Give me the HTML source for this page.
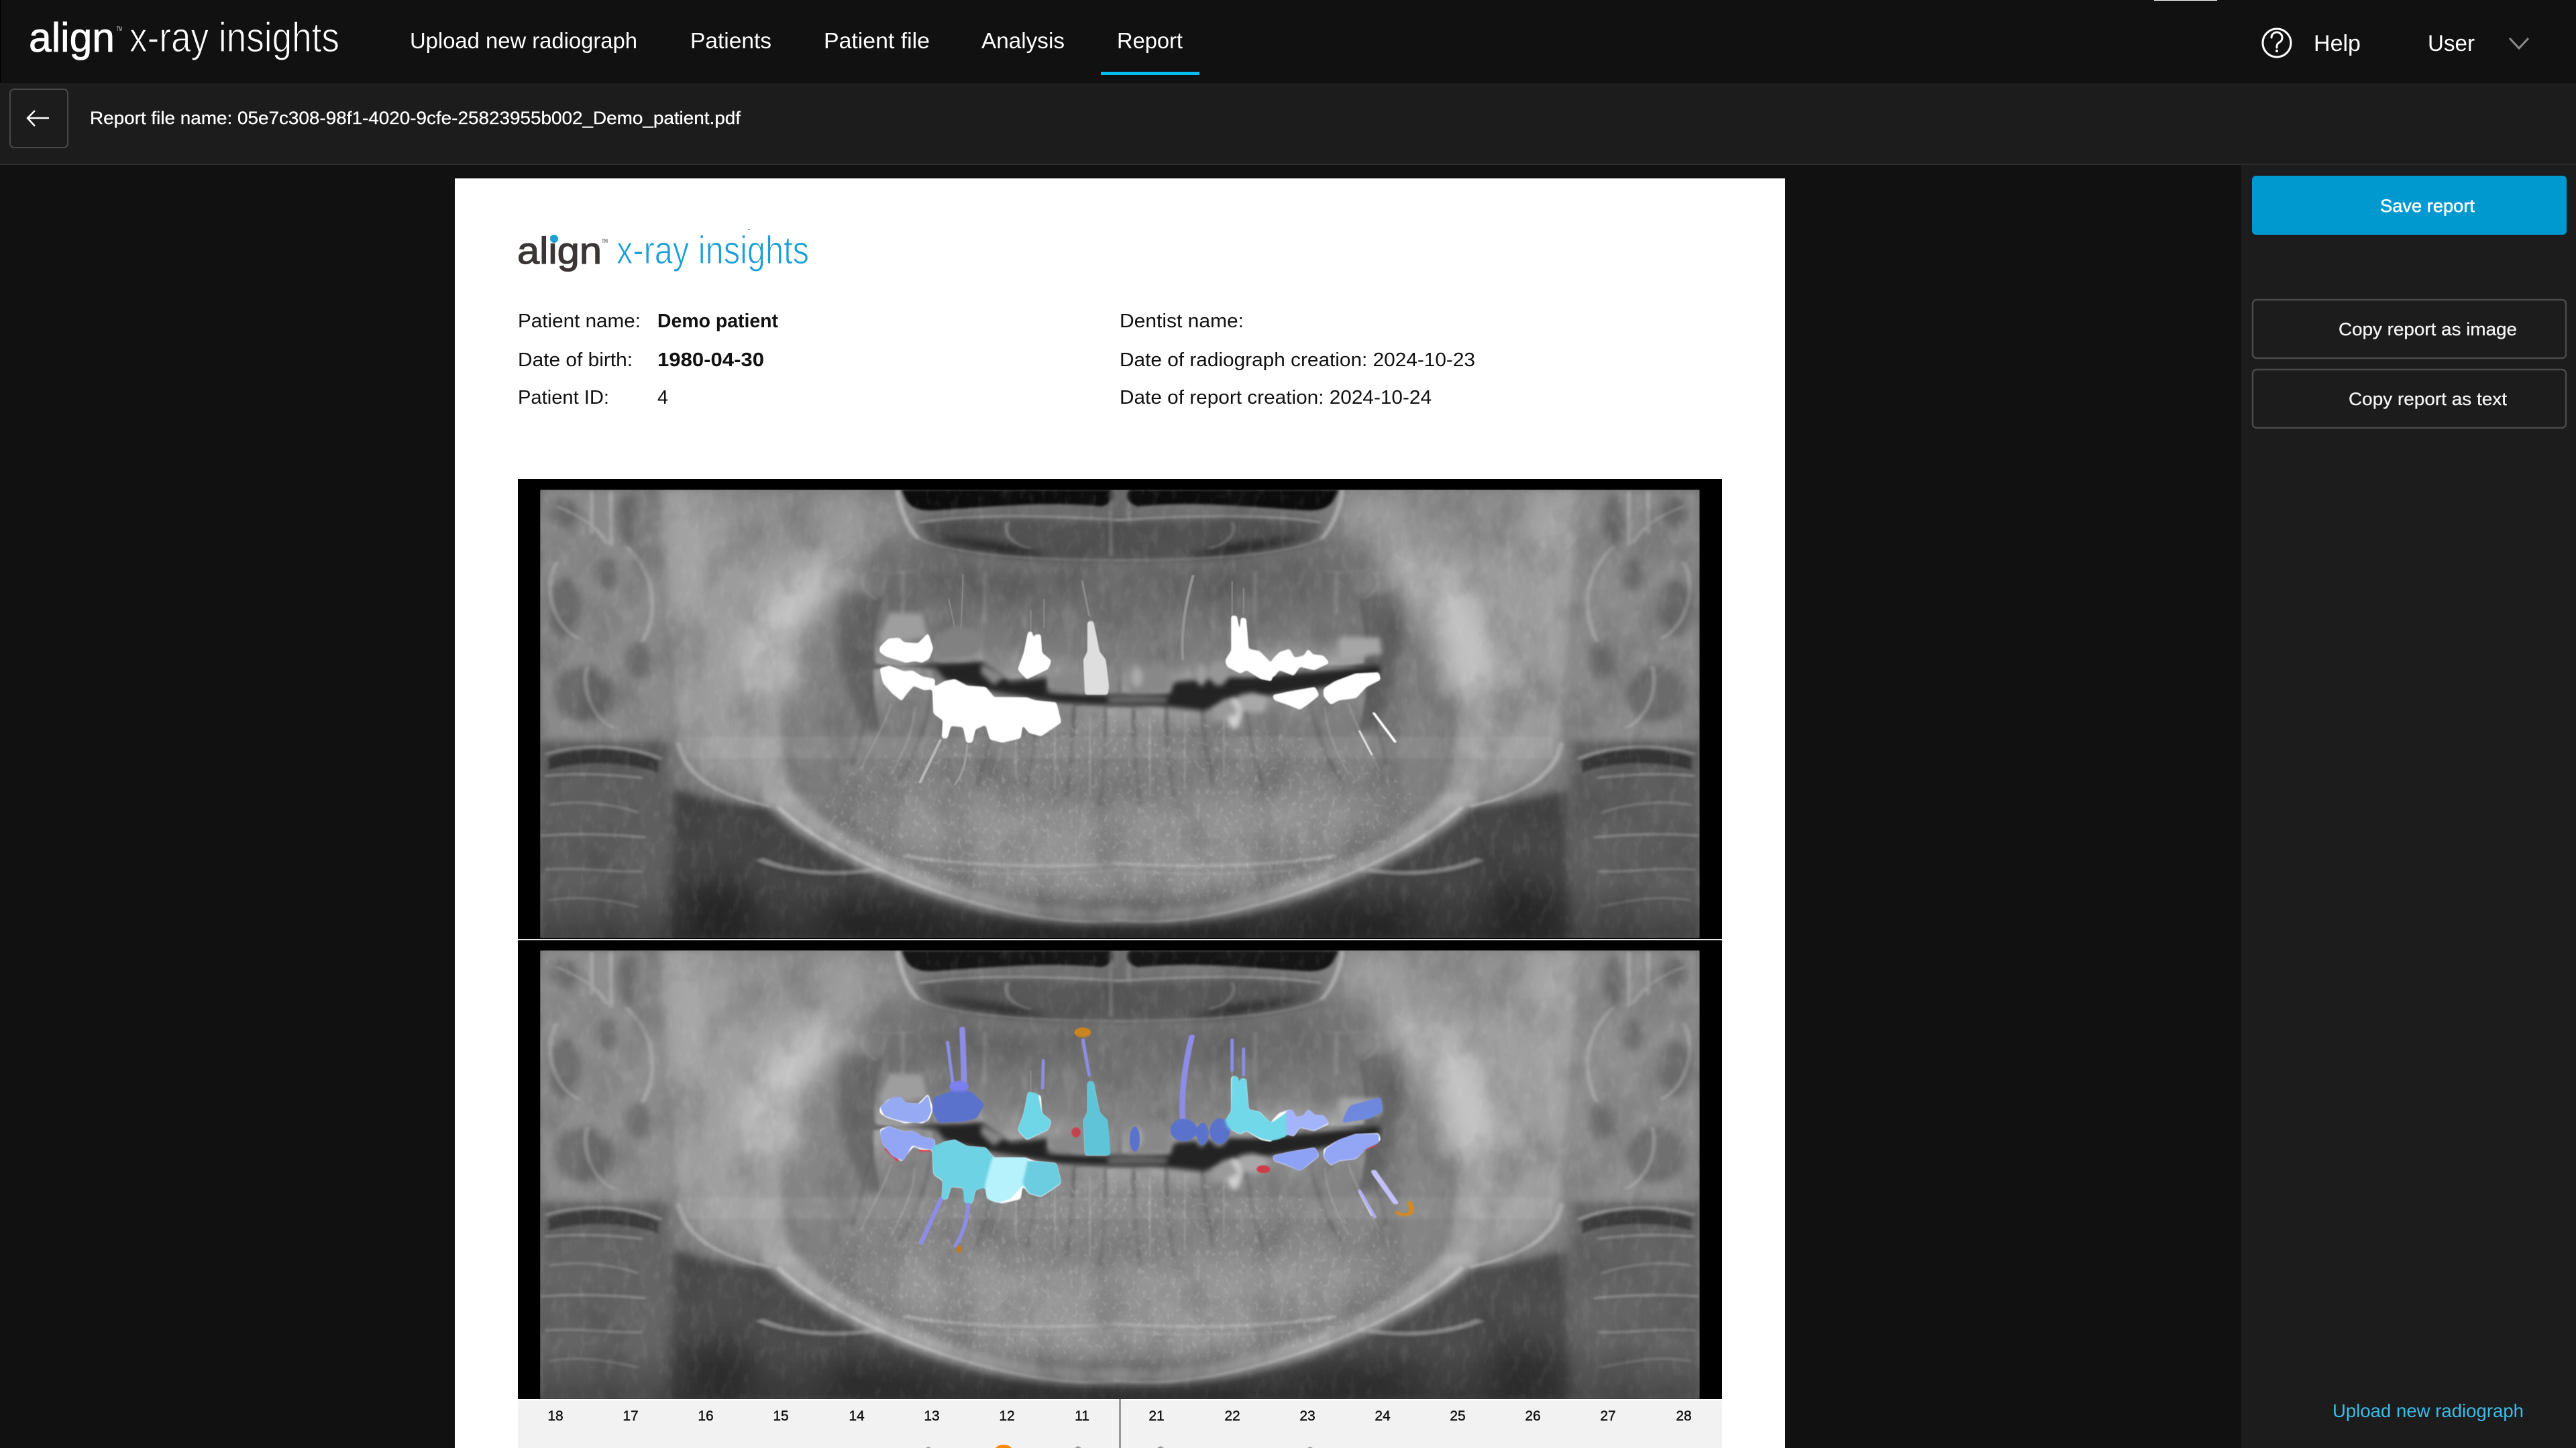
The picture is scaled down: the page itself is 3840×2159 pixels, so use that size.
<!DOCTYPE html>
<html lang="en">
<head>
<meta charset="utf-8">
<title>align x-ray insights - Report</title>
<style>
html,body{margin:0;padding:0;background:#111;width:3840px;height:2159px;overflow:hidden}
svg{display:block;position:absolute;left:0;top:0}
text{font-family:"Liberation Sans",Arial,sans-serif}
</style>
</head>
<body>
<svg xmlns="http://www.w3.org/2000/svg" width="3840" height="2159" viewBox="0 0 3840 2159">
<defs>
<filter id="b2" filterUnits="userSpaceOnUse" x="-50" y="-50" width="1700" height="1700" color-interpolation-filters="sRGB"><feGaussianBlur stdDeviation="2 4"/></filter>
<filter id="b6" filterUnits="userSpaceOnUse" x="-50" y="-50" width="1700" height="1700" color-interpolation-filters="sRGB"><feGaussianBlur stdDeviation="6 12"/></filter>
<filter id="b20" filterUnits="userSpaceOnUse" x="-200" y="-200" width="2000" height="2000" color-interpolation-filters="sRGB"><feGaussianBlur stdDeviation="22 44"/></filter>
<filter id="m1" filterUnits="userSpaceOnUse" x="-50" y="-50" width="1700" height="1700" color-interpolation-filters="sRGB"><feGaussianBlur stdDeviation="1 2"/></filter>
<filter id="goo" filterUnits="userSpaceOnUse" x="-50" y="-50" width="1700" height="1700" color-interpolation-filters="sRGB">
<feGaussianBlur stdDeviation="3 6"/>
<feColorMatrix values="1 0 0 0 0 0 1 0 0 0 0 0 1 0 0 0 0 0 7 -2.6"/>
<feGaussianBlur stdDeviation="1 2"/>
</filter>
<filter id="grain" x="0" y="0" width="100%" height="100%" color-interpolation-filters="sRGB">
<feTurbulence type="fractalNoise" baseFrequency=".02 .006" numOctaves="4" seed="4"/>
<feColorMatrix values="0 0 0 0 .15  0 0 0 0 .15  0 0 0 0 .15  2.2 0 0 0 -.95"/>
</filter>
<filter id="grain2" x="0" y="0" width="100%" height="100%" color-interpolation-filters="sRGB">
<feTurbulence type="fractalNoise" baseFrequency=".09 .02" numOctaves="3" seed="9"/>
<feColorMatrix values="0 0 0 0 1  0 0 0 0 1  0 0 0 0 1  2.4 0 0 0 -1.15"/>
</filter>
<filter id="grain3" x="0" y="0" width="100%" height="100%" color-interpolation-filters="sRGB">
<feTurbulence type="fractalNoise" baseFrequency=".16 .05" numOctaves="2" seed="21"/>
<feColorMatrix values="0 0 0 0 1  0 0 0 0 1  0 0 0 0 1  4 0 0 0 -2.2"/>
</filter>
<linearGradient id="up" x1="0" y1="0" x2="0" y2="1"><stop offset="0" stop-color="#6a6a6a" stop-opacity="0"/><stop offset=".3" stop-color="#6e6e6e"/><stop offset=".7" stop-color="#7c7c7c"/><stop offset="1" stop-color="#a4a4a4"/></linearGradient>
<linearGradient id="lo" x1="0" y1="0" x2="0" y2="1"><stop offset="0" stop-color="#a2a2a2"/><stop offset=".35" stop-color="#808080"/><stop offset="1" stop-color="#787878" stop-opacity="0"/></linearGradient>
<linearGradient id="fade" x1="0" y1="0" x2="0" y2="1"><stop offset="0" stop-color="#000" stop-opacity="0"/><stop offset=".88" stop-color="#000" stop-opacity="0"/><stop offset="1" stop-color="#000" stop-opacity=".3"/></linearGradient>
<clipPath id="xc"><rect x="39" y="66" width="1489" height="1456"/></clipPath>
<clipPath id="tb"><ellipse cx="784" cy="1110" rx="380" ry="300"/></clipPath>

<g id="half">
 <!-- ramus -->
 <path filter="url(#b20)" fill="#9c9c9c" d="M190,66H505V240C450,270 400,340 370,480C340,620 325,800 335,1090L290,1075C240,1030 215,960 215,880Z"/>
 <path filter="url(#b6)" fill="#ababab" opacity=".55" d="M190,66H258C240,400 232,700 232,900C228,940 222,930 215,900C205,600 195,300 190,66Z"/>
 <path filter="url(#b20)" fill="#7a7a7a" opacity=".4" d="M262,70H415C420,170 400,270 350,285C300,290 268,200 262,70Z"/>
 <!-- upper spine -->
 <path filter="url(#b6)" fill="#8a8a8a" d="M39,66H190L215,880H39Z"/>
 <g filter="url(#b6)" fill="#4c4c4c" opacity=".5">
  <ellipse cx="70" cy="450" rx="22" ry="95"/><ellipse cx="125" cy="340" rx="14" ry="55"/><ellipse cx="150" cy="160" rx="12" ry="85"/><ellipse cx="70" cy="140" rx="16" ry="50"/><ellipse cx="95" cy="730" rx="38" ry="90"/><ellipse cx="165" cy="620" rx="16" ry="60"/>
 </g>
 <g fill="none" stroke="#d0d0d0" stroke-width="5" opacity=".38" filter="url(#b2)">
  <path d="M60,300C40,400 60,520 90,550"/><path d="M100,640C90,720 110,820 135,840"/><path d="M150,250C190,350 190,470 170,560"/><path d="M60,120C90,150 110,180 125,240"/><path d="M130,70V250"/><path d="M105,70V210"/>
 </g>
 <!-- lower spine -->
 <path filter="url(#b6)" fill="#5e5e5e" d="M39,890H200L215,1522H39Z"/>
 <path filter="url(#b2)" fill="#363636" d="M50,935C90,900 150,900 190,945L190,985C150,945 90,945 50,975Z"/>
 <g fill="none" stroke="#bcbcbc" filter="url(#b2)" opacity=".55">
  <path stroke-width="7" d="M45,925C90,890 150,890 195,940"/>
  <path stroke-width="6" d="M45,995C90,985 130,990 170,1002"/>
  <path stroke-width="4" d="M50,1090C90,1070 140,1090 165,1115"/>
  <path stroke-width="6" d="M40,1190C80,1180 130,1185 175,1195"/>
  <path stroke-width="5" d="M45,1300C90,1290 130,1310 170,1305"/>
  <path stroke-width="4" d="M50,1400C90,1380 130,1400 165,1420"/>
 </g>
 <!-- below-jaw darkness -->
 <path filter="url(#b6)" fill="#464646" d="M210,1040C280,1090 330,1100 345,1100C400,1230 520,1370 650,1440C720,1475 760,1470 790,1465V1530H205Z"/>
 <path filter="url(#b20)" fill="#1c1c1c" opacity=".6" d="M225,1330H310V1530H225ZM400,1400L520,1430L640,1530H420Z"/>
 <path filter="url(#b20)" fill="#1c1c1c" opacity=".7" d="M620,1470H800V1540H620Z"/>
 <path filter="url(#b2)" fill="none" stroke="#808080" stroke-width="14" d="M320,1265C360,1310 430,1330 490,1285"/>
 <!-- jaw interior -->
 <path filter="url(#b20)" fill="#808080" d="M340,820C330,980 360,1090 430,1190C510,1310 600,1395 655,1420C720,1455 760,1455 790,1445V310C700,310 540,300 490,330C440,370 350,520 340,820Z"/>
 <path filter="url(#b20)" fill="#939393" d="M480,1050L790,1100V1400L630,1350L490,1200Z"/>
 <path filter="url(#b20)" fill="#616161" d="M520,300C600,300 700,320 790,320V440H500Z"/>
 <path filter="url(#b6)" fill="#5a5a5a" opacity=".75" d="M425,390C410,560 430,760 462,850L485,850L490,420Z"/>
 <!-- bright bands -->
 <g fill="none" stroke-linecap="round">
  <path filter="url(#b6)" stroke="#bcbcbc" stroke-width="50" opacity=".62" d="M350,1070C400,1230 540,1370 640,1425C720,1460 760,1455 790,1448"/>
  <path filter="url(#b6)" stroke="#b4b4b4" stroke-width="40" opacity=".6" d="M325,700C330,860 330,960 350,1070"/>
  <path filter="url(#b20)" stroke="#d0d0d0" stroke-width="70" opacity=".85" d="M410,330C355,420 335,540 335,700"/>
  <path filter="url(#b2)" stroke="#c4c4c4" stroke-width="7" opacity=".8" d="M345,1097C400,1230 520,1370 650,1440C720,1475 760,1470 790,1462"/>
  <path filter="url(#b2)" stroke="#b8b8b8" stroke-width="7" opacity=".8" d="M217,890C225,1000 270,1060 332,1092"/>
  <path filter="url(#b2)" stroke="#b4b4b4" stroke-width="10" opacity=".7" d="M510,1255C570,1285 700,1296 790,1278"/>
  <path filter="url(#b2)" stroke="#a4a4a4" stroke-width="6" opacity=".7" d="M560,1300C640,1320 720,1315 790,1300"/>
  <path filter="url(#b2)" stroke="#b4b4b4" stroke-width="5" opacity=".5" d="M430,280C400,320 360,370 340,440"/>
 </g>
 <!-- nasal region -->
 <path filter="url(#b6)" fill="#525252" d="M525,170C600,150 700,160 790,170V296C700,295 590,280 540,240Z"/>
 <path filter="url(#b2)" fill="#0c0c0c" d="M503,66H772C778,90 772,112 760,120C700,104 640,116 550,132C520,138 510,120 503,66Z"/>
 <path filter="url(#b6)" fill="#2a2a2a" d="M548,215C590,270 660,282 700,286L640,240Z"/>
 <g fill="none" filter="url(#b2)" opacity=".6">
  <path stroke="#cfcfcf" stroke-width="6" d="M498,66C500,120 510,190 525,225"/>
  <path stroke="#b8b8b8" stroke-width="6" d="M525,172C600,142 700,150 790,165"/>
  <path stroke="#9c9c9c" stroke-width="5" d="M525,225C570,280 680,295 790,295"/>
  <path stroke="#a0a0a0" stroke-width="4" d="M640,170C630,210 650,250 670,255"/>
  <path stroke="#8f8f8f" stroke-width="4" d="M440,270C430,300 470,350 520,330"/>
  <path stroke="#909090" stroke-width="4" d="M795,70V280"/>
 </g>
 <!-- lower teeth -->
 <g fill="url(#lo)" filter="url(#b2)">
  <path d="M467,650Q505,635 543,650C545,760 530,900 515,1000H495C480,900 465,760 467,650Z"/>
  <path d="M545,700Q585,680 620,700C620,820 610,930 595,1040H570C555,930 540,820 545,700Z"/>
  <path d="M625,745Q650,730 675,745C675,860 668,950 660,1020H640C632,950 625,860 625,745Z"/>
  <path d="M680,760Q700,750 722,760C722,880 716,980 710,1060H692C686,980 680,880 680,760Z"/>
  <path d="M726,770Q745,762 764,770C764,890 760,1000 755,1090H736C730,1000 726,890 726,770Z"/>
  <path d="M768,775Q785,768 800,775C800,890 797,1000 793,1100H776C770,1000 768,890 768,775Z"/>
 </g>
 <g fill="none" stroke="#565656" stroke-width="5" opacity=".38" filter="url(#b2)">
  <path d="M543,700C538,820 520,930 500,1010"/><path d="M622,745C622,830 610,950 598,1040"/><path d="M677,760C677,860 670,960 664,1030"/><path d="M724,775C724,860 720,990 714,1060"/><path d="M766,780C766,880 762,1000 758,1090"/><path d="M465,700C462,780 448,880 440,960"/>
 </g>
 <g fill="none" stroke="#b0b0b0" stroke-width="3" opacity=".35" filter="url(#m1)">
  <path d="M490,760C480,840 460,920 450,980"/><path d="M520,770C520,840 505,920 490,990"/><path d="M650,790V1000"/><path d="M700,790V1040"/><path d="M745,800V1060"/>
 </g>
 <!-- upper teeth -->
 <g fill="url(#up)" filter="url(#b2)">
  <path d="M470,630C465,540 470,480 491,330L519,330C540,480 545,540 540,630Q505,645 470,630Z"/>
  <path d="M543,625C538,535 543,475 562,330L588,330C607,475 612,535 607,625Q575,640 543,625Z"/>
  <path d="M609,675C604,585 609,525 625,320L645,320C661,525 666,585 661,675Q635,690 609,675Z"/>
  <path d="M664,700C659,610 664,550 680,310L700,310C716,550 721,610 716,700Q690,715 664,700Z"/>
  <path d="M720,728C715,640 720,580 738,300L762,300C780,580 785,640 780,728Q750,742 720,728Z"/>
 </g>
 <g fill="none" stroke="#949494" stroke-width="4" opacity=".5" filter="url(#b2)">
  <path d="M505,330V470"/><path d="M470,420C450,390 445,360 460,330"/><path d="M610,330V500"/>
 </g>
</g>

<g id="xray">
 <g clip-path="url(#xc)">
  <rect x="39" y="66" width="1489" height="1456" fill="#727272"/>
  <use href="#half"/>
  <use href="#half" transform="matrix(-1 0 0 1 1567 0)"/>
  <rect x="225" y="868" width="1115" height="70" fill="#fff" opacity=".07" filter="url(#b2)"/>
  <rect x="39" y="66" width="1489" height="1456" filter="url(#grain)" opacity=".2"/>
  <rect x="39" y="66" width="1489" height="1456" filter="url(#grain2)" opacity=".08"/>
  <g clip-path="url(#tb)"><rect x="400" y="810" width="770" height="600" filter="url(#grain3)" opacity=".14"/></g>
  <rect x="39" y="66" width="1489" height="1456" fill="url(#fade)"/>
 </g>
</g>

<!-- teeth detail, occlusal gap, metal in z5 coordinates -->
<g id="mouth">
 <path filter="url(#b6)" fill="#232323" d="M190,420C240,415 290,430 320,440L340,490C380,510 420,530 450,540L620,592L700,600L850,605L960,628C990,630 1005,600 1020,578L1130,562L1270,522L1400,460V425L1260,450L1100,480L1030,480L900,500L890,552L760,562L590,548L590,480L500,500L430,410L320,420Z"/>
 <path filter="url(#b6)" fill="#666" d="M735,565C790,555 840,558 885,568L880,596L740,598Z"/>
 <g filter="url(#b6)" fill="#888">
  <path d="M592,480L680,450L688,550L604,545Z"/>
  <path d="M790,440L885,430L888,545L790,550Z"/>
  <ellipse cx="808" cy="478" rx="14" ry="45" fill="#aaa"/>
  <ellipse cx="965" cy="470" rx="12" ry="48" fill="#a0a0a0"/>
  <ellipse cx="1008" cy="462" rx="22" ry="55" fill="#969696"/>
  <path d="M430,420L490,470L460,515L428,460Z"/>
  <path d="M1300,300L1400,300L1405,375L1300,405Z" fill="#a6a6a6"/>
  <path d="M180,300L205,190L285,195L300,300L190,335Z" fill="#9e9e9e"/>
  <path d="M320,300L360,250L420,270L435,340L395,395L325,395Z" fill="#818181"/>
  <ellipse cx="1045" cy="640" rx="18" ry="70" fill="#d0d0d0"/>
  <path d="M1055,560L1090,548L1128,570L1118,635L1065,635Z" fill="#a8a8a8"/>
  <path d="M990,620L1038,585L1055,640L1005,675Z" fill="#9a9a9a"/>
 </g>
</g>
<g id="metal">
 <g fill="#fff" filter="url(#goo)">
  <path d="M182,345L203,307L230,303L240,323L275,328L300,282L312,350L302,397L285,414L268,407L245,414L225,402L198,387L182,367Z"/>
  <path d="M182,440L205,428L240,453L262,450L285,476L317,488L314,532L290,537L265,517L250,547L235,585L213,552L190,505Z"/>
  <path d="M310,530L340,497L365,488L395,518L440,523L460,568L540,570L560,583L612,593L624,682L575,743L545,728L530,692L525,752L480,772L450,757L440,692L415,712L407,772L393,772L385,702L355,697L347,752L333,752L336,672L313,642Z"/>
  <path d="M543,278L552,273L557,310L561,288L574,288L577,370L600,405L592,442L540,488L518,445L533,370Z"/>
  <path d="M1038,203L1052,206L1057,270L1060,270L1061,213L1074,216L1080,353L1107,363L1137,420L1137,497L1110,487L1075,447L1060,462L1028,432L1023,405L1038,360Z"/>
  <path d="M1138,400L1155,368L1180,353L1192,393L1215,383L1225,353L1237,378L1262,383L1277,415L1240,447L1205,432L1190,472L1155,447L1140,482L1133,430Z"/>
  <path d="M1138,560L1180,543L1242,523L1252,560L1227,597L1205,624L1175,602L1143,582Z"/>
  <path d="M1263,530L1290,498L1340,463L1397,458L1402,490L1367,522L1342,572L1300,582L1280,602L1263,565Z"/>
 </g>
 <path fill="#dedede" filter="url(#goo)" d="M688,230L702,228L710,300L717,365L732,400L740,520L737,557L682,557L678,400L688,365Z"/>
 <g fill="none" stroke-linecap="round" filter="url(#m1)">
  <path stroke="#fff" stroke-width="7" d="M1385,640L1395,665L1437,768"/>
  <path stroke="#e0e0e0" stroke-width="5" d="M1350,720L1380,825"/>
  <path stroke="#b8b8b8" stroke-width="7" d="M330,760L280,950"/>
  <path stroke="#a0a0a0" stroke-width="5" d="M395,780C392,860 385,910 365,960"/>
  <path stroke="#929292" stroke-width="4" d="M675,50L692,205"/>
  <path stroke="#949494" stroke-width="7" d="M945,25C925,150 915,300 920,400"/>
  <path stroke="#8e8e8e" stroke-width="3" d="M1040,50V200M1068,80V200M550,180V270M582,130V260M385,20L380,260M350,130L365,260"/>
 </g>
</g>
</defs>

<!-- page chrome -->
<rect width="3840" height="2159" fill="#111"/>
<rect y="122" width="3840" height="1" fill="#000"/>
<rect y="123" width="3840" height="121" fill="#1c1c1c"/>
<rect y="244" width="3840" height="2" fill="#2c2c2c"/>
<rect x="3341" y="246" width="499" height="1913" fill="#1c1c1c"/>
<rect x="3211" y="0" width="94" height="1" fill="#fff"/>
<rect x="0" y="0" width="1" height="122" fill="#000"/>

<!-- header -->
<text x="43" y="77" font-size="61" fill="#fff" stroke="#fff" stroke-width=".8" textLength="128" lengthAdjust="spacingAndGlyphs">align</text>
<text x="174" y="46" font-size="9" fill="#ddd" textLength="8" lengthAdjust="spacingAndGlyphs">TM</text>
<text x="193" y="77" font-size="62" fill="#fff" stroke="#111" stroke-width="1.2" textLength="313" lengthAdjust="spacingAndGlyphs">x-ray insights</text>

<g font-size="33" fill="#fff">
<text x="611" y="72" textLength="339" lengthAdjust="spacingAndGlyphs">Upload new radiograph</text>
<text x="1029" y="72" textLength="121" lengthAdjust="spacingAndGlyphs">Patients</text>
<text x="1228" y="72" textLength="158" lengthAdjust="spacingAndGlyphs">Patient file</text>
<text x="1463" y="72" textLength="124" lengthAdjust="spacingAndGlyphs">Analysis</text>
<text x="1665" y="72" textLength="98" lengthAdjust="spacingAndGlyphs">Report</text>
<text x="3449" y="76" textLength="70" lengthAdjust="spacingAndGlyphs" font-size="34">Help</text>
<text x="3619" y="76" textLength="70" lengthAdjust="spacingAndGlyphs" font-size="34">User</text>
</g>
<rect x="1641" y="107" width="147" height="5" fill="#00bfee"/>

<circle cx="3394" cy="64" r="21" fill="none" stroke="#fff" stroke-width="3"/>
<path d="M3386,56a8,8 0 1 1 12,7c-3,2 -4,3 -4,8" fill="none" stroke="#fff" stroke-width="3" stroke-linecap="round"/>
<circle cx="3394" cy="76" r="2" fill="#fff"/>
<path d="M3741,57L3755,72L3769,57" fill="none" stroke="#8a8a8a" stroke-width="3"/>

<!-- sub bar -->
<rect x="15" y="133" width="86" height="87" rx="6" fill="#1c1c1c" stroke="#484848" stroke-width="2"/>
<path d="M73,176H41M52,165L41,176L52,188" fill="none" stroke="#fff" stroke-width="2.5"/>
<text x="134" y="185" font-size="27" fill="#fff" stroke="#fff" stroke-width=".3" textLength="970" lengthAdjust="spacingAndGlyphs">Report file name: 05e7c308-98f1-4020-9cfe-25823955b002_Demo_patient.pdf</text>

<!-- report page -->
<rect x="678" y="266" width="1983" height="1893" fill="#fff"/>
<text x="771" y="393" font-size="56" fill="#3b3535" stroke="#3b3535" stroke-width="1.2" textLength="126" lengthAdjust="spacingAndGlyphs">align</text>
<circle cx="826" cy="356" r="6" fill="#1a9fd6"/>
<text x="897" y="362" font-size="8" fill="#3b3535" textLength="9" lengthAdjust="spacingAndGlyphs">TM</text>
<text x="919" y="393" font-size="58" fill="#1a9fd6" stroke="#fff" stroke-width="1.1" textLength="287" lengthAdjust="spacingAndGlyphs">x-ray insights</text>
<rect x="1115" y="342" width="3" height="1" fill="#1a9fd6"/>

<g font-size="29" fill="#111">
<text x="772" y="488" textLength="183" lengthAdjust="spacingAndGlyphs">Patient name:</text>
<text x="980" y="488" font-weight="bold" textLength="180" lengthAdjust="spacingAndGlyphs">Demo patient</text>
<text x="772" y="546" textLength="171" lengthAdjust="spacingAndGlyphs">Date of birth:</text>
<text x="980" y="546" font-weight="bold" textLength="159" lengthAdjust="spacingAndGlyphs">1980-04-30</text>
<text x="772" y="602" textLength="136" lengthAdjust="spacingAndGlyphs">Patient ID:</text>
<text x="980" y="602" textLength="16" lengthAdjust="spacingAndGlyphs">4</text>
<text x="1669" y="488" textLength="185" lengthAdjust="spacingAndGlyphs">Dentist name:</text>
<text x="1669" y="546" textLength="530" lengthAdjust="spacingAndGlyphs">Date of radiograph creation: 2024-10-23</text>
<text x="1669" y="602" textLength="465" lengthAdjust="spacingAndGlyphs">Date of report creation: 2024-10-24</text>
</g>

<!-- radiographs -->
<rect x="772" y="714" width="1795" height="1372" fill="#000"/>
<rect x="772" y="1400" width="1795" height="2" fill="#e8e8e8"/>
<g transform="translate(760,700) scale(1.1607,.4591)"><use href="#xray"/></g>
<g transform="translate(1200,850) scale(.6122,.3333)"><use href="#mouth"/><use href="#metal"/></g>

<g transform="translate(760,1387) scale(1.1607,.4591)"><use href="#xray"/></g>
<rect x="805" y="1417" width="1729" height="669" fill="#fff" opacity=".04"/>
<g transform="translate(1200,1537) scale(.6122,.3333)"><use href="#mouth"/><use href="#metal"/></g>

<!-- coloured overlays (z7 coordinates) -->
<g transform="translate(1200,1500) scale(.6122,.3333)">
 <g fill="none" stroke="#8d8de6" stroke-linecap="round" filter="url(#m1)">
  <path stroke-width="8" d="M347,160L360,350"/>
  <path stroke-width="14" d="M383,100L388,350"/>
  <path stroke-width="8" d="M677,150L692,310"/>
  <path stroke-width="7" d="M580,240L578,370"/>
  <path stroke-width="14" d="M942,135C925,260 915,400 920,510"/>
  <path stroke-width="8" d="M1040,150V290"/>
  <path stroke-width="8" d="M1068,190V310"/>
  <path stroke-width="12" d="M332,860L283,1060"/>
  <path stroke-width="10" d="M398,880C395,960 385,1020 365,1075"/>
  <path stroke="#c3c0fb" stroke-width="14" d="M1385,740L1438,880"/>
  <path stroke="#b2b0f6" stroke-width="8" d="M1350,825L1388,945"/>
  <path stroke="#d8444f" stroke-width="8" d="M197,640L225,690"/>
  <path stroke="#d8444f" stroke-width="8" d="M280,648L303,648"/>
  <path stroke="#d8444f" stroke-width="5" d="M1340,655L1390,625"/>
  <path stroke="#d08a28" stroke-width="13" d="M1472,880C1485,925 1470,948 1442,925"/>
 </g>
 <g filter="url(#goo)">
 <circle cx="375" cy="360" r="24" fill="#7a80ef"/>
 <path fill="#96a9f3" d="M183,450L213,408L235,408L245,433L280,438L300,398L307,470L297,512L275,522L245,517L220,507L193,490Z"/>
 <path fill="#5b72cc" d="M313,410L355,383L405,383L437,440L417,502L385,517L325,522L311,470Z"/>
 <path fill="#93a6f6" d="M183,560L205,538L240,563L262,558L285,583L317,598L312,642L285,637L260,622L240,692L213,672L188,615Z"/>
 <path fill="#6cd2e4" d="M310,630L340,608L365,598L395,628L440,633L460,680L457,780L440,812L415,822L407,882L388,882L385,812L355,807L347,862L333,867L336,780L313,752Z"/>
 <path fill="#b6f2fc" d="M456,678L542,678L532,800L500,862L470,880L443,862L438,800Z"/>
 <path fill="#6ccde0" d="M543,693L612,703L624,790L575,852L545,837L530,790Z"/>
 <path fill="#6fd6e8" d="M543,383L567,393L577,480L600,515L592,552L540,597L518,555L533,480Z"/>
 <path fill="#5fc4d8" d="M688,338L702,336L710,410L717,475L737,510L744,667L682,667L678,510L688,475Z"/>
 <circle cx="676" cy="118" r="21" fill="#c9841f"/>
 <g fill="#5b72cc">
  <ellipse cx="922" cy="555" rx="32" ry="50"/><ellipse cx="968" cy="572" rx="14" ry="50"/><ellipse cx="1010" cy="560" rx="24" ry="57"/><ellipse cx="803" cy="595" rx="12" ry="57"/>
 </g>
 <path fill="#70d8e8" d="M1040,313L1054,316L1060,380L1060,323L1074,328L1080,463L1105,473L1135,523L1140,518L1172,478L1172,582L1150,597L1135,602L1110,592L1075,557L1060,572L1028,542L1023,515L1038,470Z"/>
 <path fill="#a4b4fa" d="M1172,468L1187,463L1197,498L1215,488L1225,460L1242,488L1262,488L1277,520L1240,557L1205,542L1190,582L1172,572Z"/>
 <path fill="#6e88de" d="M1328,445L1402,408L1407,470L1377,502L1308,522L1316,480Z"/>
 <path fill="#8ea2f5" d="M1138,670L1180,653L1242,633L1252,670L1227,707L1205,737L1175,712L1143,692Z"/>
 <path fill="#93a6f6" d="M1268,640L1300,598L1340,573L1397,573L1397,612L1367,637L1342,682L1300,692L1280,712L1263,675Z"/>
 <ellipse cx="660" cy="565" rx="11" ry="22" fill="#c8414f"/>
 <circle cx="1116" cy="730" r="17" fill="#cf3c48"/>
 <ellipse cx="375" cy="1088" rx="7" ry="18" fill="#c27a22"/>
 </g>
</g>

<!-- tooth chart -->
<rect x="772" y="2086" width="1795" height="2" fill="#fff"/>
<rect x="772" y="2088" width="1795" height="71" fill="#f2f2f2"/>
<rect x="1668" y="2086" width="3" height="73" fill="#999"/>
<g font-size="21" fill="#111" text-anchor="middle" stroke="#111" stroke-width=".4">
<text x="828" y="2118">18</text><text x="940" y="2118">17</text><text x="1052" y="2118">16</text><text x="1164" y="2118">15</text>
<text x="1277" y="2118">14</text><text x="1389" y="2118">13</text><text x="1501" y="2118">12</text><text x="1613" y="2118">11</text>
<text x="1724" y="2118">21</text><text x="1837" y="2118">22</text><text x="1949" y="2118">23</text><text x="2061" y="2118">24</text>
<text x="2173" y="2118">25</text><text x="2285" y="2118">26</text><text x="2397" y="2118">27</text><text x="2510" y="2118">28</text>
</g>
<path d="M1380,2159L1384,2157L1388,2159ZM1602,2159L1607,2156L1612,2159ZM1725,2159L1730,2156L1735,2159ZM1949,2159L1953,2157L1957,2159Z" fill="#999"/>
<path d="M1484,2159Q1488,2154 1496,2154Q1504,2154 1508,2159Z" fill="#ff8a00"/>

<!-- right panel -->
<rect x="3357" y="262" width="469" height="88" rx="6" fill="#0099cf"/>
<text x="3548" y="316" font-size="27" fill="#fff" stroke="#fff" stroke-width=".5" textLength="141" lengthAdjust="spacingAndGlyphs">Save report</text>
<rect x="3358" y="447" width="467" height="87" rx="6" fill="#1c1c1c" stroke="#4a4a4a" stroke-width="2.5"/>
<text x="3486" y="500" font-size="27" fill="#f4f4f4" stroke="#f4f4f4" stroke-width=".3" textLength="266" lengthAdjust="spacingAndGlyphs">Copy report as image</text>
<rect x="3358" y="551" width="467" height="87" rx="6" fill="#1c1c1c" stroke="#4a4a4a" stroke-width="2.5"/>
<text x="3501" y="604" font-size="27" fill="#f4f4f4" stroke="#f4f4f4" stroke-width=".3" textLength="236" lengthAdjust="spacingAndGlyphs">Copy report as text</text>
<text x="3477" y="2113" font-size="28" fill="#3dbbe8" textLength="285" lengthAdjust="spacingAndGlyphs">Upload new radiograph</text>
</svg>
</body>
</html>
